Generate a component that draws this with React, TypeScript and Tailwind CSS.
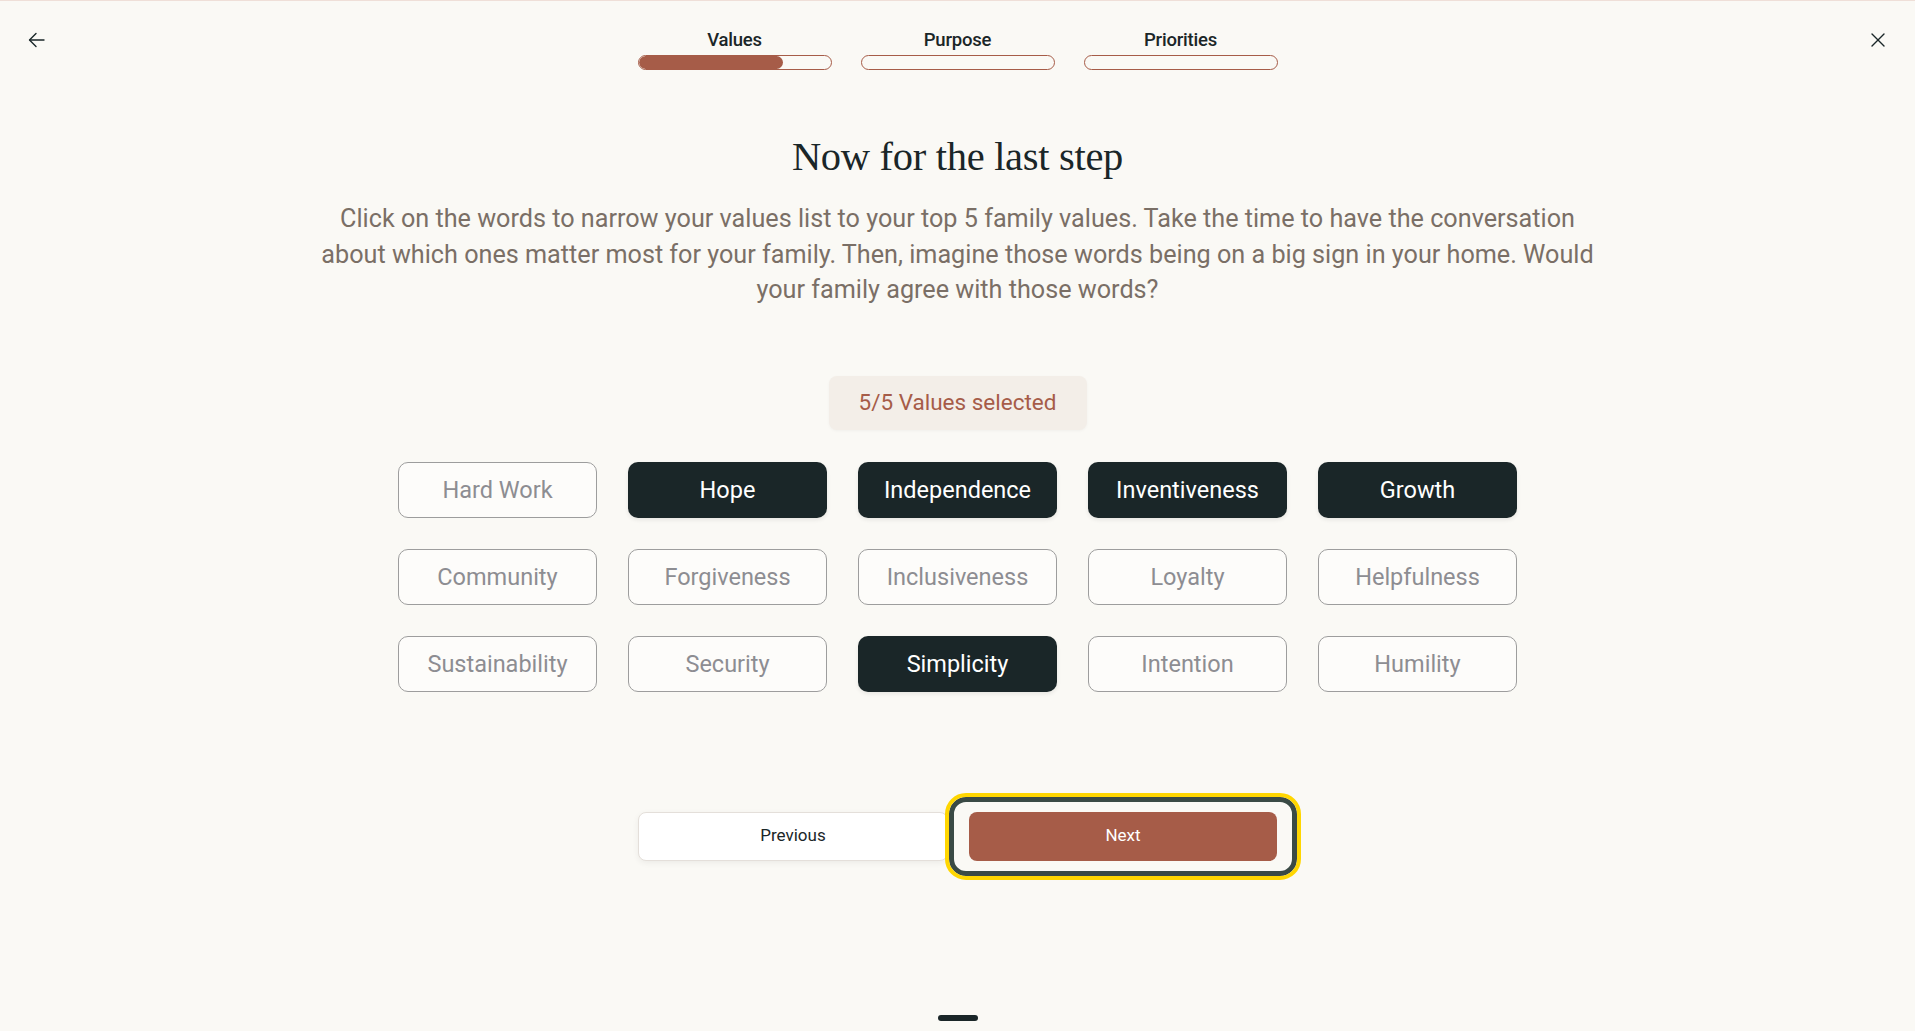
import React from "react";

const values: { label: string; selected: boolean }[] = [
  { label: "Hard Work", selected: false },
  { label: "Hope", selected: true },
  { label: "Independence", selected: true },
  { label: "Inventiveness", selected: true },
  { label: "Growth", selected: true },
  { label: "Community", selected: false },
  { label: "Forgiveness", selected: false },
  { label: "Inclusiveness", selected: false },
  { label: "Loyalty", selected: false },
  { label: "Helpfulness", selected: false },
  { label: "Sustainability", selected: false },
  { label: "Security", selected: false },
  { label: "Simplicity", selected: true },
  { label: "Intention", selected: false },
  { label: "Humility", selected: false },
];

const steps = [
  { label: "Values", fill: 75 },
  { label: "Purpose", fill: 0 },
  { label: "Priorities", fill: 0 },
];

export default function App() {
  return (
    <div
      className="min-h-[1031px] w-full bg-[#faf9f5] border-t border-[#efdfd8] flex flex-col text-[#1a2628]"
      style={{ fontFamily: "Roboto, 'Liberation Sans', sans-serif" }}
    >
      <header className="flex items-start justify-between px-[25px] pt-[27px]">
        <button className="w-6 h-6 flex items-center justify-center text-[#1a2628]">
          <svg width="20" height="20" viewBox="0 0 20 20" fill="none" stroke="currentColor" strokeWidth="1.4" strokeLinecap="round" strokeLinejoin="round">
            <path d="M17 10H3" />
            <path d="M9 3.5L2.5 10L9 16.5" />
          </svg>
        </button>
        <div className="flex gap-[29px]">
          {steps.map((s) => (
            <div key={s.label} className="w-[194px] flex flex-col items-center">
              <div className="h-[24px] leading-[24px] text-[18.5px] font-medium tracking-[-0.2px]">{s.label}</div>
              <div className="mt-[3px] h-[15px] w-full rounded-full border-[1.5px] border-[#a65c48] overflow-hidden">
                <div className="h-full bg-[#a65c48] rounded-full" style={{ width: `${s.fill}%` }} />
              </div>
            </div>
          ))}
        </div>
        <button className="w-6 h-6 flex items-center justify-center text-[#1a2628]">
          <svg width="16" height="16" viewBox="0 0 16 16" fill="none" stroke="currentColor" strokeWidth="1.4" strokeLinecap="round">
            <path d="M2 2L14 14" />
            <path d="M14 2L2 14" />
          </svg>
        </button>
      </header>

      <main className="flex flex-col items-center">
        <h1
          className="mt-[63px] text-[40.5px] leading-[48px] text-[#1a2628] tracking-[-0.3px]"
          style={{ fontFamily: "'Liberation Serif', 'DejaVu Serif', serif" }}
        >
          Now for the last step
        </h1>
        <p className="mt-[20px] w-[1360px] text-center text-[25.2px] leading-[35.5px] text-[#7a6f66]">
          Click on the words to narrow your values list to your top 5 family values. Take the time to have the conversation
          <br />
          about which ones matter most for your family. Then, imagine those words being on a big sign in your home. Would
          <br />
          your family agree with those words?
        </p>

        <div className="mt-[68px] h-[54px] w-[258px] rounded-[8px] bg-[#f3eee8] shadow-[0_1px_3px_rgba(0,0,0,0.04)] flex items-center justify-center text-[22.5px] text-[#a65c48]">
          5/5 Values selected
        </div>

        <div className="mt-[32px] grid grid-cols-[repeat(5,199px)] gap-x-[31px] gap-y-[31px]">
          {values.map((v) =>
            v.selected ? (
              <button
                key={v.label}
                className="h-[56px] pt-[2px] rounded-[10px] bg-[#1a2628] text-white text-[23.5px] shadow-[0_2px_4px_rgba(0,0,0,0.08)] flex items-center justify-center"
              >
                {v.label}
              </button>
            ) : (
              <button
                key={v.label}
                className="h-[56px] pt-[2px] rounded-[10px] border border-[#9d9d9d] bg-[#fdfcfa] text-[#8d8d92] text-[23.5px] flex items-center justify-center"
              >
                {v.label}
              </button>
            )
          )}
        </div>

        <div className="mt-[120px] flex gap-[21px]">
          <button className="h-[49px] w-[310px] rounded-[8px] border border-[#e4dfda] bg-white shadow-[0_2px_6px_rgba(0,0,0,0.06)] text-[17px] text-[#1a2628] flex items-center justify-center">
            Previous
          </button>
          <div className="relative">
            <span className="absolute -inset-x-[20px] -inset-y-[15px] rounded-[17px] border-[5px] border-[#3a4a45] outline-[4px] outline-solid outline-[#ffd600] pointer-events-none" />
            <button className="relative h-[49px] w-[308px] rounded-[8px] bg-[#a65c48] text-white text-[17px] flex items-center justify-center">
              Next
            </button>
          </div>
        </div>

        <div className="mt-[154px] h-[6px] w-[40px] rounded-full bg-[#1a2628]" />
      </main>
    </div>
  );
}
